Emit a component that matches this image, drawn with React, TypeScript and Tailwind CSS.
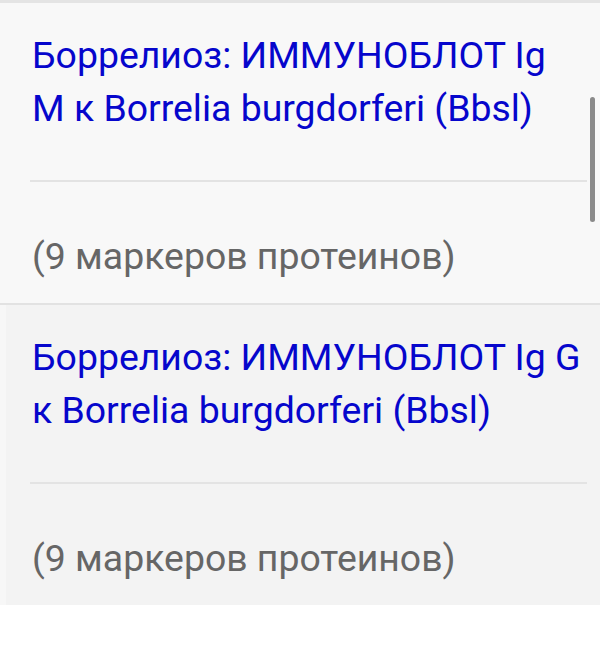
import React from 'react';

const items = [
  { first: 'Боррелиоз: ИММУНОБЛОТ Ig', rest: 'M к Borrelia burgdorferi (Bbsl)', note: '(9 маркеров протеинов)', bg: 'bg-[#f8f8f8] pl-[32px]' },
  { first: 'Боррелиоз: ИММУНОБЛОТ Ig G', rest: 'к Borrelia burgdorferi (Bbsl)', note: '(9 маркеров протеинов)', bg: 'bg-[#f3f3f3] border-l-[6px] border-l-[#f7f7f7] pl-[26px]' },
];

const App: React.FC = () => {
  return (
    <div className="relative w-[600px] h-[672px] bg-white font-['Roboto',sans-serif] overflow-hidden">
      <div className="h-[3px] bg-[#e4e4e4]"></div>
      {items.map((item, i) => (
        <div key={i}>
          {i > 0 && <div className="h-[2px] bg-[#e2e2e2]"></div>}
          <div className={`${item.bg} pr-[13px] pt-[26px] pb-[20px]`}>
            <p className="text-[37.4px] leading-[53px] text-[#0606cc] whitespace-nowrap">
              {item.first}
              <br />
              {item.rest}
            </p>
            <div className="mt-[45px] h-[2px] bg-[#e3e3e3] -ml-[2px]"></div>
            <p className="mt-[48px] text-[37.4px] leading-[53px] text-[#666666]">{item.note}</p>
          </div>
        </div>
      ))}
      <div className="absolute right-[5px] top-[97px] w-[5px] h-[125px] rounded-full bg-[#8a8a8a]"></div>
    </div>
  );
};

export default App;
